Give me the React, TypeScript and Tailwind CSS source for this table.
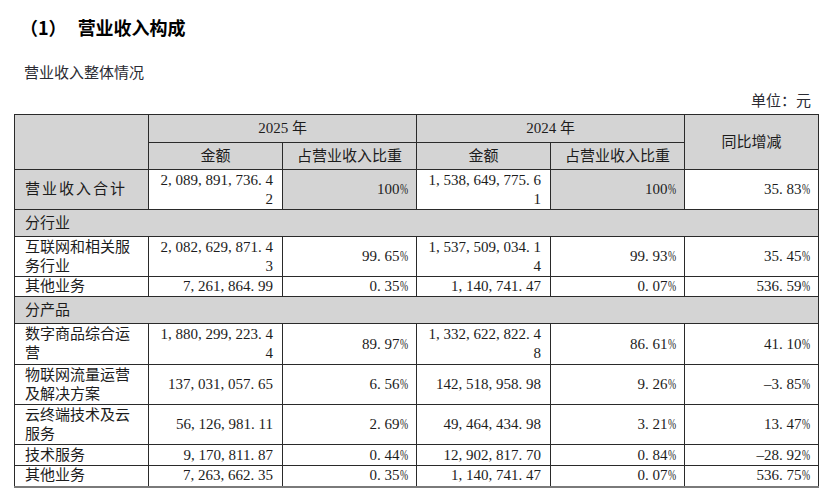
import React from 'react'

type Row =
  | { kind: 'section'; label: string }
  | {
      kind: 'data'
      label: string[]
      a: string[]
      ap: string
      b: string[]
      bp: string
      yoy: string
      h: string
      total?: boolean
    }

const rows: Row[] = [
  {
    kind: 'data',
    label: ['营业收入合计'],
    a: ['2,089,891,736.4', '2'],
    ap: '100%',
    b: ['1,538,649,775.6', '1'],
    bp: '100%',
    yoy: '35.83%',
    h: 'h-[40px]',
    total: true,
  },
  { kind: 'section', label: '分行业' },
  {
    kind: 'data',
    label: ['互联网和相关服', '务行业'],
    a: ['2,082,629,871.4', '3'],
    ap: '99.65%',
    b: ['1,537,509,034.1', '4'],
    bp: '99.93%',
    yoy: '35.45%',
    h: 'h-[40px]',
  },
  {
    kind: 'data',
    label: ['其他业务'],
    a: ['7,261,864.99'],
    ap: '0.35%',
    b: ['1,140,741.47'],
    bp: '0.07%',
    yoy: '536.59%',
    h: 'h-[20px]',
  },
  { kind: 'section', label: '分产品' },
  {
    kind: 'data',
    label: ['数字商品综合运', '营'],
    a: ['1,880,299,223.4', '4'],
    ap: '89.97%',
    b: ['1,332,622,822.4', '8'],
    bp: '86.61%',
    yoy: '41.10%',
    h: 'h-[41px]',
  },
  {
    kind: 'data',
    label: ['物联网流量运营', '及解决方案'],
    a: ['137,031,057.65'],
    ap: '6.56%',
    b: ['142,518,958.98'],
    bp: '9.26%',
    yoy: '-3.85%',
    h: 'h-[40px]',
  },
  {
    kind: 'data',
    label: ['云终端技术及云', '服务'],
    a: ['56,126,981.11'],
    ap: '2.69%',
    b: ['49,464,434.98'],
    bp: '3.21%',
    yoy: '13.47%',
    h: 'h-[40px]',
  },
  {
    kind: 'data',
    label: ['技术服务'],
    a: ['9,170,811.87'],
    ap: '0.44%',
    b: ['12,902,817.70'],
    bp: '0.84%',
    yoy: '-28.92%',
    h: 'h-[21px]',
  },
  {
    kind: 'data',
    label: ['其他业务'],
    a: ['7,263,662.35'],
    ap: '0.35%',
    b: ['1,140,741.47'],
    bp: '0.07%',
    yoy: '536.75%',
    h: 'h-[21px]',
  },
]

// SimSun-style half-width punctuation
function Num({ v }: { v: string }) {
  return (
    <>
      {v.split('').map((c, i) => {
        if (c === ',' || c === '.')
          return (
            <span key={i} className="inline-block w-[0.5em] text-left">
              {c}
            </span>
          )
        if (c === '-')
          return (
            <span key={i} className="inline-block w-[0.5em] text-left">
              –
            </span>
          )
        if (c === '%')
          return (
            <span key={i} className="inline-block w-[0.5em] text-left scale-x-[0.65] origin-left">
              %
            </span>
          )
        return <span key={i}>{c}</span>
      })}
    </>
  )
}

function Lines({ lines }: { lines: string[] }) {
  return (
    <>
      {lines.map((l, i) => (
        <div key={i}>
          <Num v={l} />
        </div>
      ))}
    </>
  )
}

const cell = 'border border-[#2a2a2a] p-0 align-middle'
const gray = 'bg-[#d4d4d4]'
const num = 'text-right pr-[9px] leading-[19px]'

export default function App() {
  return (
    <div
      className="w-[830px] h-[504px] bg-white text-[#1c1c1c] overflow-hidden"
      style={{ fontFamily: '"Liberation Serif", "Noto Sans CJK SC", serif' }}
    >
      <div
        className="pt-[17px] pl-[20px] text-[18px] leading-[20px] font-bold text-black flex"
        style={{ fontFamily: '"Noto Sans CJK SC", sans-serif' }}
      >
        <span>（1）</span>
        <span className="ml-[11px]">营业收入构成</span>
      </div>
      <div className="mt-[26px] pl-[24px] text-[15px] leading-[20px] text-[#2b2b33]">营业收入整体情况</div>
      <div className="mt-[8px] pr-[19px] text-right text-[15px] leading-[20px] text-[#2b2b33]">单位：元</div>

      <table className="mt-[3px] ml-[14px] w-[804px] table-fixed border-collapse text-[15px] border-b-2 border-b-[#7a7a7a]">
        <colgroup>
          <col className="w-[134px]" />
          <col className="w-[134px]" />
          <col className="w-[134px]" />
          <col className="w-[134px]" />
          <col className="w-[134px]" />
          <col className="w-[134px]" />
        </colgroup>
        <tbody>
          <tr className="h-[28px]">
            <td rowSpan={2} className={`${cell} ${gray}`}></td>
            <td colSpan={2} className={`${cell} ${gray} text-center`}>
              2025 年
            </td>
            <td colSpan={2} className={`${cell} ${gray} text-center`}>
              2024 年
            </td>
            <td rowSpan={2} className={`${cell} ${gray} text-center`}>
              同比增减
            </td>
          </tr>
          <tr className="h-[27px]">
            <td className={`${cell} ${gray} text-center`}>金额</td>
            <td className={`${cell} ${gray} text-center`}>占营业收入比重</td>
            <td className={`${cell} ${gray} text-center`}>金额</td>
            <td className={`${cell} ${gray} text-center`}>占营业收入比重</td>
          </tr>
          {rows.map((r, i) =>
            r.kind === 'section' ? (
              <tr key={i} className="h-[27px]">
                <td colSpan={6} className={`${cell} ${gray} pl-[10px]`}>
                  {r.label}
                </td>
              </tr>
            ) : (
              <tr key={i} className={r.h}>
                <td
                  className={`${cell} pl-[10px] leading-[19px] ${r.total ? `${gray} tracking-[2px]` : ''}`}
                >
                  {r.label.map((l, j) => (
                    <div key={j}>{l}</div>
                  ))}
                </td>
                <td className={`${cell} ${num}`}>
                  <Lines lines={r.a} />
                </td>
                <td className={`${cell} ${num} ${r.total ? gray : ''}`}>
                  <Num v={r.ap} />
                </td>
                <td className={`${cell} ${num}`}>
                  <Lines lines={r.b} />
                </td>
                <td className={`${cell} ${num} ${r.total ? gray : ''}`}>
                  <Num v={r.bp} />
                </td>
                <td className={`${cell} ${num}`}>
                  <Num v={r.yoy} />
                </td>
              </tr>
            )
          )}
        </tbody>
      </table>
    </div>
  )
}
